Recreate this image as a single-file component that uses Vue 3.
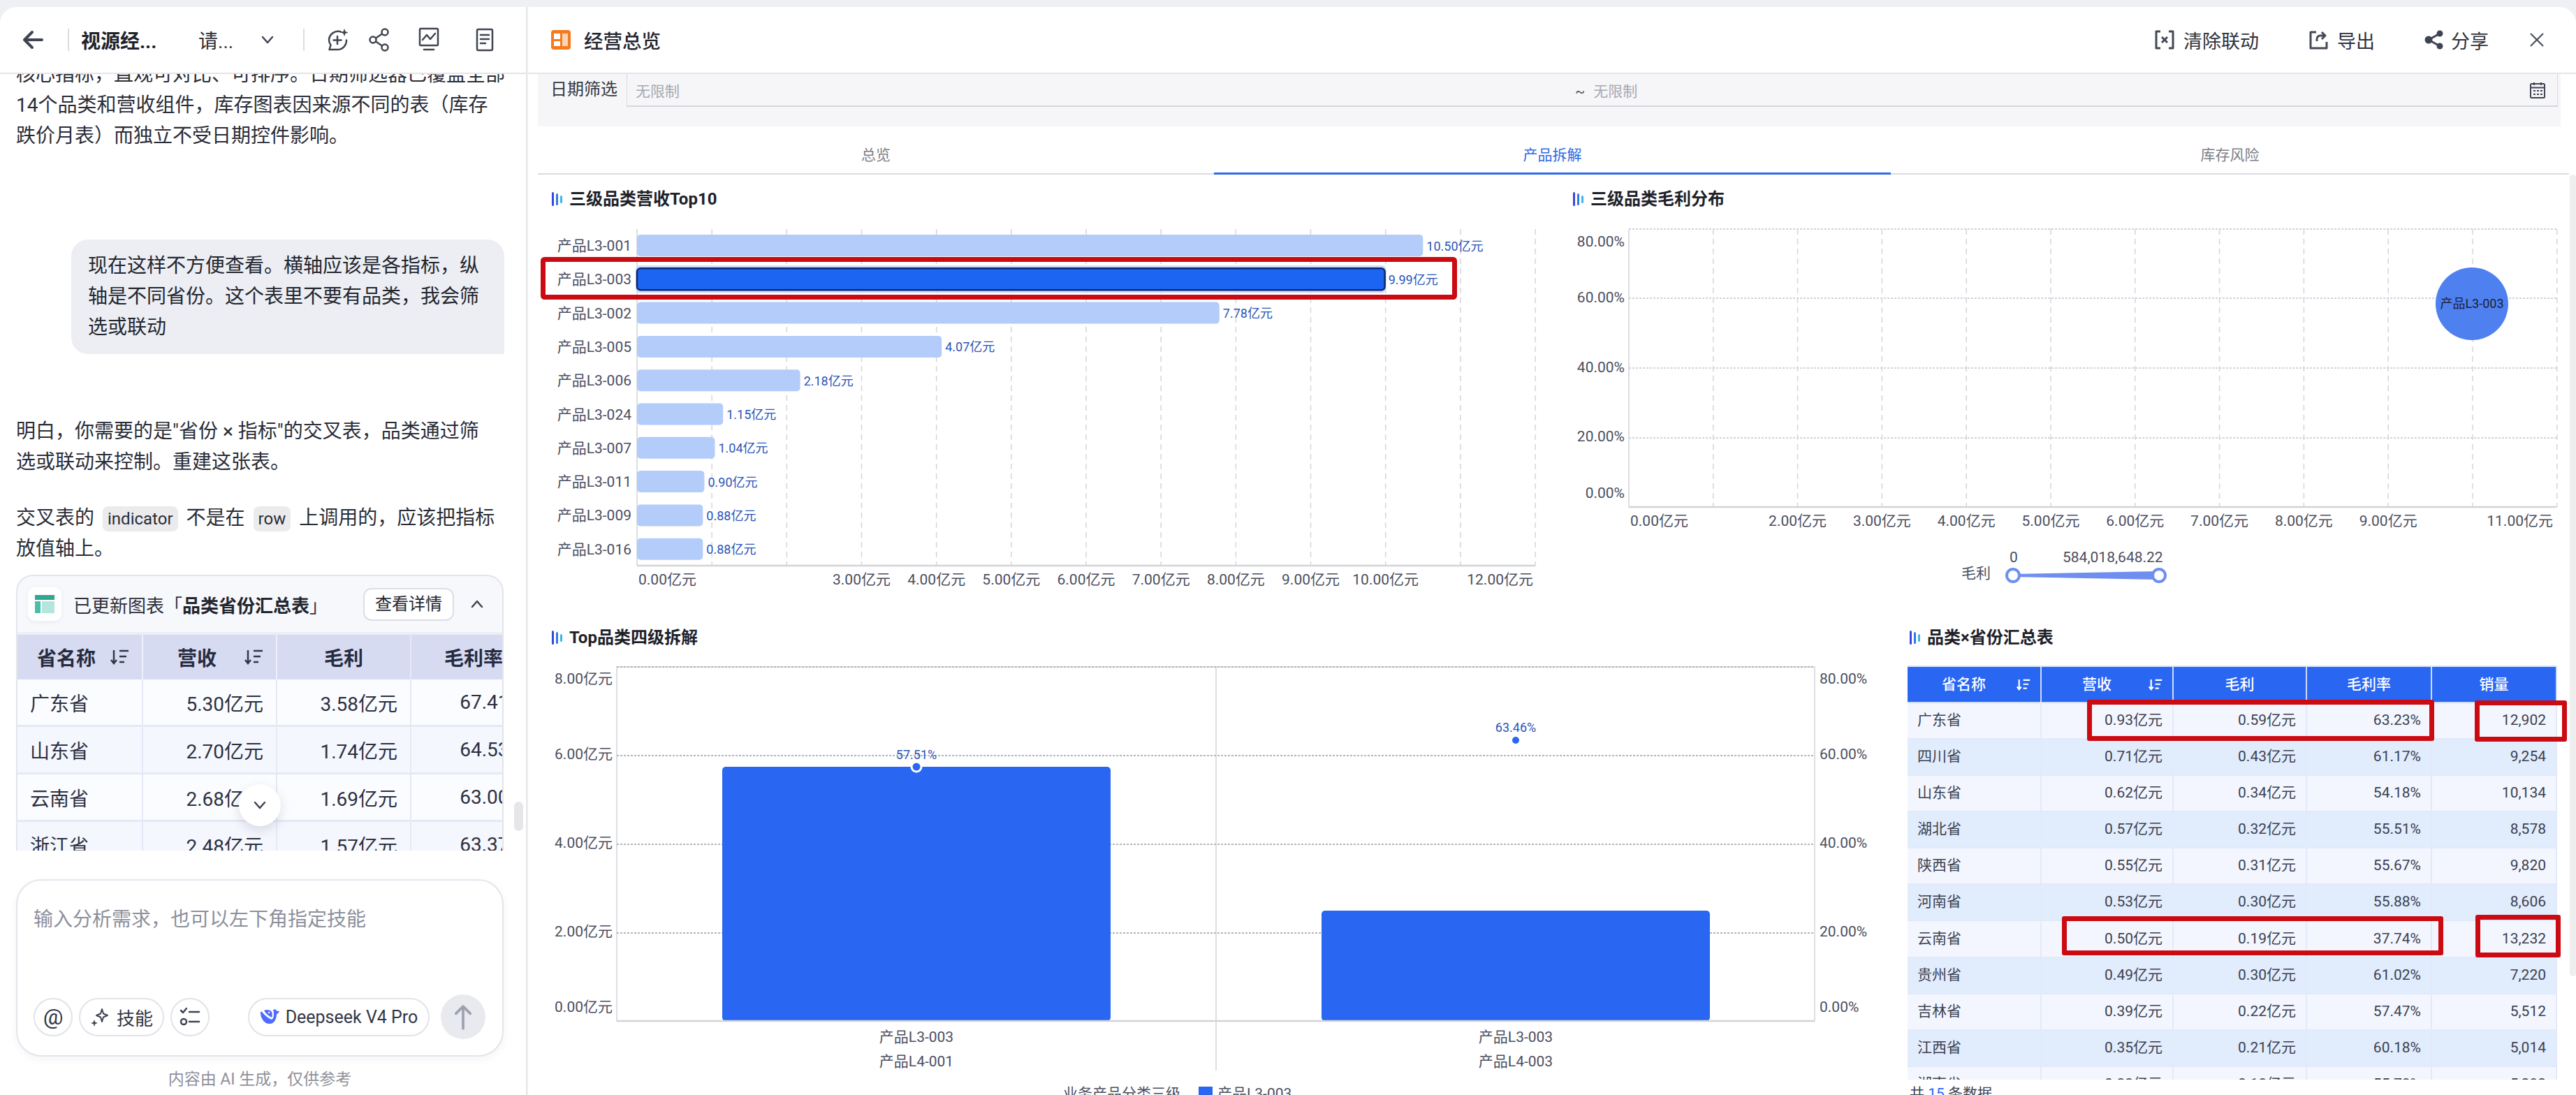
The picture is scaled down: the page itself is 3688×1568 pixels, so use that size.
<template>
  <div class="page">
    <!-- left chat panel -->
    <aside class="chat-panel">
      <header class="chat-head">
        <svg class="ic back" width="32" height="32" viewBox="0 0 32 32"><path d="M29 16H5M15 5L4 16l11 11" /></svg>
        <i class="vline first"></i>
        <b class="chat-title">视源经...</b>
        <span class="chat-sub">请...</span>
        <svg class="ic chev" width="20" height="14" viewBox="0 0 20 14"><path d="M3 3l7 8 7-8" /></svg>
        <i class="vline second"></i>
        <svg class="ic i1" width="34" height="34" viewBox="0 0 34 34">
          <path d="M22 5.500A13 13 0 0 0 5 17c0 3 1 5.500 2.500 7.500L5.500 31H17a13 13 0 0 0 13-13.500" />
          <path d="M17 12v11M11.500 17.500h11" />
          <path class="fill" d="M27 1l1.500 4 4 1.500-4 1.500L27 12l-1.500-4-4-1.500 4-1.500z" />
        </svg>
        <svg class="ic i2" width="32" height="34" viewBox="0 0 32 34">
          <circle cx="7" cy="17" r="4.500" /><circle cx="24" cy="6" r="4.500" /><circle cx="24" cy="28" r="4.500" />
          <path d="M11 14.500l9-6M11 19.500l9 6" />
        </svg>
        <svg class="ic i3" width="32" height="36" viewBox="0 0 32 36">
          <rect x="3" y="2" width="26" height="24" rx="1.500" />
          <path d="M7 18l6-7 5 6 7-8M9 32h14" />
        </svg>
        <svg class="ic i4" width="26" height="34" viewBox="0 0 26 34">
          <rect x="2" y="2" width="22" height="30" rx="2" />
          <path d="M7 10h12M7 16h12M7 22h7" />
        </svg>
      </header>

      <div class="chat-scroll">
        <div class="chat-inner">
          <p class="para top">核心指标，直观可对比、可排序。日期筛选器已覆盖全部<br />14个品类和营收组件，库存图表因来源不同的表（库存<br />跌价月表）而独立不受日期控件影响。</p>
          <div class="bubble">现在这样不方便查看。横轴应该是各指标，纵<br />轴是不同省份。这个表里不要有品类，我会筛<br />选或联动</div>
          <p class="para answer">明白，你需要的是"省份 × 指标"的交叉表，品类通过筛<br />选或联动来控制。重建这张表。</p>
          <p class="para answer2">交叉表的<code>indicator</code>不是在<code>row</code>上调用的，应该把指标<br />放值轴上。</p>

          <section class="result-card">
            <div class="result-head">
              <span class="sheet-box">
                <svg width="28" height="26" viewBox="0 0 28 26">
                  <rect width="28" height="7" fill="#2fa88f" />
                  <rect y="9" width="8" height="17" fill="#4cbda8" />
                  <rect x="10" y="9" width="18" height="17" fill="#b5e6dd" />
                </svg>
              </span>
              <span class="result-text">已更新图表「<b>品类省份汇总表</b>」</span>
              <span class="detail-btn">查看详情</span>
              <svg class="ic up" width="20" height="14" viewBox="0 0 20 14"><path d="M3 11l7-8 7 8" /></svg>
            </div>
            <div class="mini-table">
              <div class="mini-row mini-header">
                <div class="mini-cell sort first-sort">省名称
                  <svg class="sort-ic" width="27" height="24" viewBox="0 0 27 24"><path d="M5 2v19M1 16l4 5 4-5M13 3h13M13 11h10M13 19h7" /></svg>
                </div>
                <div class="mini-cell sort second-sort">营收
                  <svg class="sort-ic" width="27" height="24" viewBox="0 0 27 24"><path d="M5 2v19M1 16l4 5 4-5M13 3h13M13 11h10M13 19h7" /></svg>
                </div>
                <div class="mini-cell center">毛利</div>
                <div class="mini-cell center">毛利率</div>
              </div>
              <div v-for="r in miniRows" :key="r[0]" class="mini-row">
                <div class="mini-cell">{{ r[0] }}</div>
                <div class="mini-cell num">{{ r[1] }}</div>
                <div class="mini-cell num">{{ r[2] }}</div>
                <div class="mini-cell num">{{ r[3] }}</div>
              </div>
            </div>
          </section>
        </div>
        <span class="thumb"></span>
        <span class="to-bottom">
          <svg class="ic" width="20" height="14" viewBox="0 0 20 14"><path d="M3 3l7 8 7-8" /></svg>
        </span>
      </div>

      <div class="composer-wrap">
        <div class="composer">
          <div class="placeholder">输入分析需求，也可以左下角指定技能</div>
          <div class="tools">
            <span class="pill round at">@</span>
            <span class="pill skill">
              <svg width="28" height="28" viewBox="0 0 28 28">
                <path class="spark" d="M17 3l2 6.500L25 12l-6 2.500L17 21l-2-6.500L9 12l6-2.500z" />
                <path class="spark-dot" d="M6 18l1.300 3.700L11 23l-3.700 1.300L6 28l-1.300-3.700L1 23l3.700-1.300z" />
              </svg>
              技能
            </span>
            <span class="pill round">
              <svg class="ic" width="30" height="28" viewBox="0 0 30 28">
                <path d="M2 5l3 3 5-6M14 7h14M14 21h14" />
                <circle cx="6" cy="21" r="4" />
              </svg>
            </span>
            <span class="pill model">
              <svg width="28" height="24" viewBox="0 0 28 24" fill="#4d6bfe">
                <path d="M1 6c0 8 5 16 13 16 6 0 10-6 10-14 2 0 3-2 4-4-2 0-4 0-5-2-1-1-3-1-4 0 1 2 1 4 1 6 0 4-1 7-3 8C12 14 7 10 3 5 2 4 1 5 1 6z" />
                <path d="M6 3c4-2 9-1 11 2 1 3 1 6 0 8-4-2-8-5-11-10z" />
                <circle cx="13" cy="6" r="1.200" fill="#fff" />
              </svg>
              Deepseek V4 Pro
            </span>
            <span class="send">
              <svg width="28" height="40" viewBox="0 0 28 40"><path d="M14 38V4M3 15L14 4l11 11" /></svg>
            </span>
          </div>
        </div>
        <div class="disclaimer">内容由 AI 生成，仅供参考</div>
      </div>
    </aside>

    <!-- right dashboard -->
    <main class="board">
      <header class="board-head">
        <svg width="28" height="28" viewBox="0 0 28 28">
          <rect width="28" height="28" rx="4" fill="#f47a20" />
          <rect x="4" y="5" width="9" height="8" fill="#fff" />
          <rect x="16" y="5" width="8" height="18" fill="#fbd3b0" />
          <rect x="4" y="16" width="9" height="7" fill="#fff" />
        </svg>
        <span class="board-title">经营总览</span>
        <span class="head-action clear">
          <svg class="ic dark" width="28" height="28" viewBox="0 0 28 28">
            <path d="M8 2H2v24h6M20 2h6v24h-6M10 10l8 8M18 10l-8 8" />
          </svg>
          清除联动
        </span>
        <span class="head-action export">
          <svg class="ic dark" width="27" height="28" viewBox="0 0 27 28">
            <path d="M10 3H2v23h23v-9" />
            <path d="M11 16v-3c0-3 2-5 5-5h6M18 3l5 5-5 5" />
          </svg>
          导出
        </span>
        <span class="head-action share">
          <svg width="27" height="28" viewBox="0 0 27 28" fill="#3f4452">
            <circle cx="6" cy="14" r="5.500" /><circle cx="22" cy="5" r="4.500" /><circle cx="22" cy="23" r="4.500" />
            <path d="M6 14L22 5M6 14l16 9" stroke="#3f4452" stroke-width="3" />
          </svg>
          分享
        </span>
        <svg class="close" width="22" height="22" viewBox="0 0 22 22"><path d="M2 2l18 18M20 2L2 20" /></svg>
      </header>

      <div class="filter-bar">
        <span class="filter-label">日期筛选</span>
        <div class="date-range">
          <span class="date-from">无限制</span>
          <span class="date-to"><em>~</em>无限制</span>
          <svg class="calendar" width="24" height="24" viewBox="0 0 24 24">
            <rect x="2" y="3" width="20" height="20" rx="1.500" />
            <path d="M2 8.500h20M7 1v4M17 1v4M6 13h3M11 13h3M16 13h3M6 18h3M11 18h3M16 18h3" />
          </svg>
        </div>
      </div>

      <nav class="tabs">
        <span class="tab">总览</span>
        <span class="tab active">产品拆解</span>
        <span class="tab">库存风险</span>
      </nav>

      <div class="row one">
        <section class="col c1">
          <h3 class="sec-title"><i class="bars"><u></u><u></u><u></u></i>三级品类营收Top10</h3>
          <svg class="plot" width="1471" height="560" viewBox="769 320 1471 560">
            <line v-for="g in revGrid" :key="g" class="dash" :x1="revX(g)" :x2="revX(g)" y1="328" y2="810" />
            <line class="axis" x1="911" x2="911" y1="328" y2="810" />
            <line class="axis thick" x1="911" x2="2197" y1="810" y2="810" />
            <template v-for="(b, i) in revBars" :key="b.name">
              <text class="t-axis" x="903" :y="revY(i) + 16" text-anchor="end" dominant-baseline="central">{{ b.name }}</text>
              <rect v-if="b.hot" class="halo" x="909" :y="revY(i) - 4" :width="revX(b.v) - 907" height="39" rx="6" />
              <rect :class="b.hot ? 'bar-hot' : 'bar-soft'" x="911" :y="revY(i)" :width="revX(b.v) - 911" height="31" rx="5" />
              <text class="t-val" :x="revX(b.v) + 5" :y="revY(i) + 16" dominant-baseline="central">{{ b.v.toFixed(2) }}亿元</text>
            </template>
            <text v-for="t in revTicks" :key="t.v" class="t-axis" :x="t.x" y="830" :text-anchor="t.a" dominant-baseline="central">{{ t.v }}.00亿元</text>
            <rect class="red-mark" x="776.500" y="371.500" width="1305" height="54" rx="2" />
          </svg>
        </section>

        <section class="col c2">
          <h3 class="sec-title"><i class="bars"><u></u><u></u><u></u></i>三级品类毛利分布</h3>
          <svg class="plot" width="1437" height="560" viewBox="2240 320 1437 560">
            <line v-for="g in 11" :key="g" class="dash" :x1="2331 + g * 120.800" :x2="2331 + g * 120.800" y1="328" y2="726" />
            <line v-for="g in [328, 427, 527, 627]" :key="g" class="dot" x1="2331" x2="3659" :y1="g" :y2="g" />
            <line class="axis" x1="2331" x2="2331" y1="328" y2="726" />
            <line class="axis thick" x1="2331" x2="3659" y1="726" y2="726" />
            <text v-for="t in bubbleY" :key="t[0]" class="t-axis" x="2325" :y="t[1]" text-anchor="end" dominant-baseline="central">{{ t[0] }}</text>
            <text v-for="t in bubbleX" :key="t.l" class="t-axis" :x="t.x" y="746" :text-anchor="t.a" dominant-baseline="central">{{ t.l }}</text>
            <circle cx="3538" cy="435" r="52" fill="#4f80f0" />
            <text class="t-bubble" x="3538" y="434" text-anchor="middle" dominant-baseline="central">产品L3-003</text>
            <text class="t-axis" x="2807" y="821" dominant-baseline="central">毛利</text>
            <text class="t-axis" x="2876" y="798" dominant-baseline="central">0</text>
            <text class="t-axis" x="2952" y="798" dominant-baseline="central">584,018,648.22</text>
            <path d="M2881 822L3090 818v12L2881 826z" fill="#6f8ff0" />
            <circle class="handle" cx="2881" cy="824" r="9" />
            <circle class="handle" cx="3090" cy="824" r="9" />
          </svg>
        </section>
      </div>

      <div class="row two">
        <section class="col c3">
          <h3 class="sec-title"><i class="bars"><u></u><u></u><u></u></i>Top品类四级拆解</h3>
          <svg class="plot" width="1956" height="622" viewBox="769 946 1956 622">
            <rect class="frame" x="882" y="955" width="1715" height="507" />
            <line class="frame-line" x1="1740" x2="1740" y1="955" y2="1533" />
            <line v-for="g in [955, 1082, 1209, 1336]" :key="g" class="dot2" x1="882" x2="2597" :y1="g" :y2="g" />
            <rect class="bar-main" x="1033" y="1098" width="556" height="364" rx="5" />
            <rect class="bar-main" x="1891" y="1304" width="556" height="158" rx="5" />
            <line class="axis thick" x1="882" x2="2597" y1="1462" y2="1462" />
            <text v-for="t in comboTicks" :key="t[0]" class="t-axis" x="876" :y="t[2]" text-anchor="end" dominant-baseline="central">{{ t[0] }}</text>
            <text v-for="t in comboTicks" :key="t[1]" class="t-axis" x="2604" :y="t[2]" dominant-baseline="central">{{ t[1] }}</text>
            <circle cx="1311" cy="1098" r="7" fill="#2966f2" stroke="#fff" stroke-width="3" />
            <text class="t-val" x="1311" y="1080" text-anchor="middle" dominant-baseline="central">57.51%</text>
            <circle cx="2169" cy="1060" r="5" fill="#2966f2" />
            <text class="t-val" x="2169" y="1041" text-anchor="middle" dominant-baseline="central">63.46%</text>
            <text class="t-axis" x="1311" y="1485" text-anchor="middle" dominant-baseline="central">产品L3-003</text>
            <text class="t-axis" x="1311" y="1520" text-anchor="middle" dominant-baseline="central">产品L4-001</text>
            <text class="t-axis" x="2169" y="1485" text-anchor="middle" dominant-baseline="central">产品L3-003</text>
            <text class="t-axis" x="2169" y="1520" text-anchor="middle" dominant-baseline="central">产品L4-003</text>
            <text class="t-axis" x="1521" y="1566" dominant-baseline="central">业务产品分类三级</text>
            <rect x="1715" y="1556" width="20" height="20" fill="#2966f2" />
            <text class="t-axis" x="1742" y="1566" dominant-baseline="central">产品L3-003</text>
          </svg>
        </section>

        <section class="col c4">
          <h3 class="sec-title"><i class="bars"><u></u><u></u><u></u></i>品类×省份汇总表</h3>
          <div class="summary">
            <div class="sum-row sum-head">
              <div class="sum-cell sortable s1">省名称
                <svg class="sort-ic white" width="20" height="19" viewBox="0 0 27 24"><path d="M5 2v19M1 16l4 5 4-5M13 3h13M13 11h10M13 19h7" /></svg>
              </div>
              <div class="sum-cell sortable s2">营收
                <svg class="sort-ic white" width="20" height="19" viewBox="0 0 27 24"><path d="M5 2v19M1 16l4 5 4-5M13 3h13M13 11h10M13 19h7" /></svg>
              </div>
              <div class="sum-cell mid">毛利</div>
              <div class="sum-cell mid">毛利率</div>
              <div class="sum-cell mid">销量</div>
            </div>
            <div v-for="r in sumRows" :key="r[0]" class="sum-row">
              <div class="sum-cell">{{ r[0] }}</div>
              <div class="sum-cell num">{{ r[1] }}</div>
              <div class="sum-cell num">{{ r[2] }}</div>
              <div class="sum-cell num">{{ r[3] }}</div>
              <div class="sum-cell num">{{ r[4] }}</div>
            </div>
            <span class="mark m1"></span>
            <span class="mark m2"></span>
            <span class="mark m3"></span>
            <span class="mark m4"></span>
          </div>
          <div class="sum-foot">共 <span>15</span> 条数据</div>
        </section>
      </div>
      <span class="board-thumb"></span>
    </main>
  </div>
</template>

<script setup>
const miniRows = [
  ['广东省', '5.30亿元', '3.58亿元', '67.41%'],
  ['山东省', '2.70亿元', '1.74亿元', '64.53%'],
  ['云南省', '2.68亿元', '1.69亿元', '63.00%'],
  ['浙江省', '2.48亿元', '1.57亿元', '63.37%']
]

const revBars = [
  { name: '产品L3-001', v: 10.5 },
  { name: '产品L3-003', v: 9.99, hot: true },
  { name: '产品L3-002', v: 7.78 },
  { name: '产品L3-005', v: 4.07 },
  { name: '产品L3-006', v: 2.18 },
  { name: '产品L3-024', v: 1.15 },
  { name: '产品L3-007', v: 1.04 },
  { name: '产品L3-011', v: 0.9 },
  { name: '产品L3-009', v: 0.88 },
  { name: '产品L3-016', v: 0.88 }
]
const revGrid = [1, 2, 3, 4, 5, 6, 7, 8, 9, 10, 11, 12]
const revX = (v) => 911 + v * 107.17
const revY = (i) => 336 + i * 48.3
const revTicks = [0, 3, 4, 5, 6, 7, 8, 9, 10, 12].map((v) => ({
  v,
  x: v === 0 ? 913 : v === 12 ? 2194 : revX(v),
  a: v === 0 ? 'start' : v === 12 ? 'end' : 'middle'
}))

const bubbleY = [
  ['80.00%', 346],
  ['60.00%', 426],
  ['40.00%', 526],
  ['20.00%', 625],
  ['0.00%', 706]
]
const bubbleX = [
  { l: '0.00亿元', x: 2333, a: 'start' },
  ...[2, 3, 4, 5, 6, 7, 8, 9].map((v) => ({ l: v + '.00亿元', x: 2331 + v * 120.8, a: 'middle' })),
  { l: '11.00亿元', x: 3654, a: 'end' }
]

const comboTicks = [
  ['8.00亿元', '80.00%', 972],
  ['6.00亿元', '60.00%', 1080],
  ['4.00亿元', '40.00%', 1207],
  ['2.00亿元', '20.00%', 1334],
  ['0.00亿元', '0.00%', 1442]
]

const sumRows = [
  ['广东省', '0.93亿元', '0.59亿元', '63.23%', '12,902'],
  ['四川省', '0.71亿元', '0.43亿元', '61.17%', '9,254'],
  ['山东省', '0.62亿元', '0.34亿元', '54.18%', '10,134'],
  ['湖北省', '0.57亿元', '0.32亿元', '55.51%', '8,578'],
  ['陕西省', '0.55亿元', '0.31亿元', '55.67%', '9,820'],
  ['河南省', '0.53亿元', '0.30亿元', '55.88%', '8,606'],
  ['云南省', '0.50亿元', '0.19亿元', '37.74%', '13,232'],
  ['贵州省', '0.49亿元', '0.30亿元', '61.02%', '7,220'],
  ['吉林省', '0.39亿元', '0.22亿元', '57.47%', '5,512'],
  ['江西省', '0.35亿元', '0.21亿元', '60.18%', '5,014'],
  ['湖南省', '0.33亿元', '0.18亿元', '55.78%', '5,292']
]
</script>

<style scoped>
.page {
  width: 3688px;
  height: 1568px;
  padding-top: 10px;
  box-sizing: border-box;
  display: flex;
  overflow: hidden;
  background: #eef0f4;
  color: #23262f;
  font-family: "Roboto", "Noto Sans CJK SC", sans-serif;
}

.ic { fill: none; stroke: #3f4452; stroke-width: 2.5; stroke-linecap: round; stroke-linejoin: round; flex: none; }
.ic .fill { fill: #3f4452; stroke: none; }

/* chat side */
.chat-panel {
  width: 753px;
  flex: none;
  display: flex;
  flex-direction: column;
  background: #fff;
  border-right: 2px solid #e7e8ed;
  border-radius: 24px 0 0 0;
}
.chat-head {
  height: 94px;
  flex: none;
  display: flex;
  align-items: center;
  border-bottom: 2px solid #e4e5ea;
}
.back { margin-left: 31px; stroke-width: 4; }
.vline { width: 2px; height: 32px; background: #dcdde3; flex: none; }
.vline.first { margin-left: 34px; }
.chat-title { font-size: 28px; margin-left: 17px; width: 168px; color: #20232c; white-space: nowrap; }
.chat-sub { font-size: 28px; width: 89px; white-space: nowrap; color: #2b2e38; }
.chev { margin-right: 41px; }
.i1 { margin-left: 30px; }
.i2 { margin-left: 27px; }
.i3 { margin-left: 39px; }
.i4 { margin-left: 51px; }

.chat-scroll {
  height: 1112px;
  flex: none;
  position: relative;
  overflow: hidden;
}
.chat-inner { padding: 0 23px 0 23px; margin-top: -21px; }
.para {
  margin: 0;
  font-size: 28px;
  line-height: 44px;
  color: #2a2d37;
  white-space: nowrap;
}
.bubble {
  margin: 126px 0 0 79px;
  padding: 16px 24px;
  width: 620px;
  box-sizing: border-box;
  font-size: 28px;
  line-height: 44px;
  background: #eceef3;
  border-radius: 24px 24px 0 24px;
  white-space: nowrap;
}
.answer { margin-top: 89px; }
.answer2 { margin-top: 36px; }
code {
  display: inline-block;
  font-family: inherit;
  font-size: 24px;
  line-height: 36px;
  padding: 0 7px;
  margin: 0 12px;
  background: #ebebee;
  border-radius: 8px;
}
.result-card {
  margin-top: 15px;
  width: 698px;
  box-sizing: border-box;
  border: 2px solid #e3e5ec;
  border-bottom: 0;
  border-radius: 24px 24px 0 0;
  background: #f7f8fc;
  overflow: hidden;
}
.result-head {
  height: 80px;
  display: flex;
  align-items: center;
  padding-left: 15px;
}
.sheet-box {
  width: 48px;
  height: 48px;
  border-radius: 10px;
  background: #fff;
  box-shadow: 0 2px 6px rgba(30, 40, 90, 0.06);
  display: flex;
  align-items: center;
  justify-content: center;
  flex: none;
}
.result-text { font-size: 26px; margin-left: 17px; width: 415px; white-space: nowrap; color: #2e313b; letter-spacing: 0; }
.result-text b { color: #23262f; }
.detail-btn {
  width: 130px;
  height: 47px;
  box-sizing: border-box;
  border: 2px solid #dcdee6;
  border-radius: 12px;
  background: #fff;
  font-size: 24px;
  line-height: 43px;
  text-align: center;
  flex: none;
}
.up { margin-left: 23px; }
.mini-table { border-top: 4px solid #eceef6; width: 770px; background: #e6e9f5; }
.mini-row { display: grid; grid-template-columns: 180px 192px 192px 180px; height: 68px; border-top: 0; background: #fbfcff; }
.mini-row:nth-child(odd) { background: #f5f7fe; }
.mini-row + .mini-row { border-bottom: 3px solid #e6e9f5; box-sizing: border-box; }
.mini-header.mini-row { background: #d6dbf2; height: 64px; }
.mini-cell {
  font-size: 28px;
  display: flex;
  align-items: center;
  padding: 0 18px;
  box-sizing: border-box;
  border-right: 2px solid #e6e9f5;
  color: #2c3040;
  white-space: nowrap;
}
.mini-cell.num { justify-content: flex-end; }
.mini-cell.center { justify-content: center; font-weight: 700; color: #282c40; }
.mini-cell.sort { justify-content: space-between; font-weight: 700; color: #282c40; border-right: 2px solid #eef0fa; }
.first-sort { padding-left: 28px; }
.second-sort { padding-left: 49px; }
.sort-ic { fill: none; stroke: #34384c; stroke-width: 2.5; flex: none; }
.sort-ic.white { stroke: #fff; stroke-width: 3; }
.thumb {
  position: absolute;
  left: 736px;
  top: 1042px;
  width: 13px;
  height: 42px;
  border-radius: 7px;
  background: #e6e6e8;
}
.to-bottom {
  position: absolute;
  left: 342px;
  top: 1017px;
  width: 60px;
  height: 60px;
  border-radius: 50%;
  background: #fff;
  box-shadow: 0 6px 16px rgba(30, 40, 70, 0.14);
  display: flex;
  align-items: center;
  justify-content: center;
}

.composer-wrap { padding: 41px 0 0 23px; }
.composer {
  width: 698px;
  height: 254px;
  box-sizing: border-box;
  border: 2px solid #e3e5ec;
  border-radius: 36px;
  box-shadow: 0 4px 12px rgba(30, 40, 70, 0.05);
  padding: 36px 23px 23px;
  display: flex;
  flex-direction: column;
  justify-content: space-between;
}
.placeholder { font-size: 28px; line-height: 40px; color: #8c8f9c; }
.tools { display: flex; align-items: center; height: 64px; }
.pill {
  height: 55px;
  box-sizing: border-box;
  border: 2px solid #e2e3e9;
  border-radius: 28px;
  display: flex;
  align-items: center;
  justify-content: center;
  font-size: 26px;
  color: #333744;
  flex: none;
}
.round { width: 56px; }
.at { font-size: 32px; }
.skill { width: 122px; margin: 0 9px; gap: 10px; }
.spark { fill: none; stroke: #3f4452; stroke-width: 2; stroke-linejoin: round; }
.spark-dot { fill: #3f4452; }
.model { width: 260px; margin-left: 55px; gap: 9px; font-size: 25px; }
.send {
  width: 64px;
  height: 64px;
  margin-left: 16px;
  border-radius: 50%;
  background: #e9eaf0;
  display: flex;
  align-items: center;
  justify-content: center;
  flex: none;
}
.send svg { fill: none; stroke: #9ea1af; stroke-width: 4; stroke-linecap: round; stroke-linejoin: round; width: 26px; height: 38px; }
.disclaimer { margin-top: 16px; width: 698px; text-align: center; font-size: 23px; line-height: 34px; color: #8f919c; }

/* dashboard */
.board {
  flex: 1;
  min-width: 0;
  position: relative;
  background: #fff;
  border-radius: 0 24px 0 0;
  padding-left: 14px;
  margin-left: 1px;
}
.board-head {
  height: 94px;
  margin-left: -14px;
  padding-left: 33px;
  display: flex;
  align-items: center;
  border-bottom: 2px solid #e4e5ea;
}
.board-title { font-size: 27.500px; font-weight: 500; margin-left: 19px; width: 2249px; color: #23262f; flex: none; }
.head-action { display: flex; align-items: center; gap: 13px; font-size: 27px; color: #2f323c; flex: none; white-space: nowrap; }
.clear { width: 221px; }
.export { width: 165px; }
.share { width: 150px; gap: 11px; }
.dark { stroke: #444957; stroke-width: 3; stroke-linecap: butt; }
.close { fill: none; stroke: #444957; stroke-width: 2; flex: none; }

.filter-bar {
  height: 75px;
  width: 2896px;
  box-sizing: border-box;
  background: #f6f6f8;
  display: flex;
  align-items: flex-start;
  padding-left: 18px;
}
.filter-label { font-size: 24px; line-height: 44px; width: 109px; color: #33363f; flex: none; }
.date-range {
  width: 2765px;
  height: 47px;
  box-sizing: border-box;
  border-left: 1px solid #dadbe0;
  border-right: 1px solid #dadbe0;
  border-bottom: 2px solid #d5d6db;
  display: grid;
  grid-template-columns: 1345px 1fr 40px;
  align-items: center;
  padding-left: 12px;
  font-size: 21px;
  color: #a7a9b3;
}
.date-to em { font-style: normal; color: #555; margin-right: 12px; }
.calendar { fill: none; stroke: #3f4452; stroke-width: 2; }

.tabs { height: 69px; width: 2908px; display: grid; grid-template-columns: 968px 969px 971px; }
.tab {
  font-size: 21px;
  line-height: 82px;
  text-align: center;
  color: #7d7f88;
  height: 69px;
  box-sizing: border-box;
  border-bottom: 2px solid #dddde0;
}
.tab.active { color: #2d6ae3; border-bottom: 3px solid #2f6be8; }

.row { display: flex; }
.row.one { height: 630px; }
.row.two { height: 688px; }
.c1 { width: 1471px; }
.c2 { width: 1437px; }
.c3 { width: 1956px; }
.c4 { width: 950px; position: relative; }
.col { flex: none; }
.sec-title {
  margin: 0;
  height: 26px;
  padding-top: 22px;
  padding-left: 20px;
  display: flex;
  align-items: center;
  gap: 10px;
  font-size: 24px;
  font-weight: 700;
  line-height: 26px;
  color: #1e2129;
  white-space: nowrap;
  box-sizing: content-box;
}
.c2 .sec-title { padding-left: 11px; }
.row.two .sec-title { padding-top: 20px; }
.c4 .sec-title { padding-left: 8px; }
.bars { display: flex; align-items: center; gap: 3px; flex: none; height: 20px; }
.bars u { display: block; width: 3px; border-radius: 2px; height: 20px; background: #3b46dc; }
.bars u:nth-child(2) { height: 17px; background: #2f7ae6; }
.bars u:nth-child(3) { height: 11px; background: #3cb4e8; }
.plot { display: block; margin-top: 22px; }
.row.two .plot { margin-top: 20px; }
.dash { stroke: #d6d6da; stroke-width: 1.5; stroke-dasharray: 8 6; }
.dot { stroke: #d2d3de; stroke-width: 2; stroke-dasharray: 3 2; }
.dot2 { stroke: #b4b5bd; stroke-width: 2; stroke-dasharray: 3 2; }
.axis { stroke: #d2d3d8; stroke-width: 1.5; }
.axis.thick { stroke-width: 2.5; }
.frame { fill: none; stroke: #d4d5da; stroke-width: 1.5; }
.frame-line { stroke: #d4d5da; stroke-width: 1.5; }
.t-axis { font-size: 21px; fill: #4b4e60; }
.t-val { font-size: 18px; fill: #2b55b8; }
.t-bubble { font-size: 18px; fill: #1c2135; }
.bar-soft { fill: #b3ccfa; }
.bar-hot { fill: #1c64f2; stroke: #0b2a6b; stroke-width: 2.5; }
.bar-main { fill: #2966f2; }
.halo { fill: #c9dafc; }
.red-mark { fill: none; stroke: #cc0a11; stroke-width: 7; }
.handle { fill: #fff; stroke: #6f8ff0; stroke-width: 4; }

.summary {
  position: relative;
  margin: 27px 0 0 5px;
  width: 930px;
  height: 593px;
  overflow: visible;
  border-top: 2px solid #d9e6fb;
}
.sum-row { display: grid; grid-template-columns: 192px 189px 191px 179px 179px; height: 52.100px; background: #f3f6fe; }
.sum-row:nth-child(odd) { background: #e1ecfc; }
.sum-row:last-of-type { height: 20px; overflow: hidden; }
.sum-head.sum-row { background: #2966f2; height: 50px; }
.sum-cell {
  font-size: 21px;
  line-height: 52px;
  padding: 0 14px;
  box-sizing: border-box;
  border-right: 2px solid #e2eafa;
  border-bottom: 2px solid #e2eafa;
  color: #3c4150;
  white-space: nowrap;
}
.sum-cell.num { text-align: right; }
.sum-head .sum-cell { color: #fff; font-weight: 500; border-color: #cfdcf8; font-size: 21px; line-height: 50px; }
.sum-cell.mid { text-align: center; }
.sortable { display: flex; align-items: center; justify-content: space-between; }
.s1 { padding-left: 49px; }
.s2 { padding-left: 58px; }
.mark { position: absolute; border: 7px solid #cc0a11; border-radius: 3px; box-sizing: border-box; pointer-events: none; }
.m1 { left: 257px; top: 47px; width: 497px; height: 59px; }
.m2 { left: 812px; top: 48px; width: 132px; height: 59px; }
.m3 { left: 221px; top: 357px; width: 546px; height: 56px; }
.m4 { left: 813px; top: 355px; width: 122px; height: 61px; }
.sum-foot { margin: 5px 0 0 8px; font-size: 21px; line-height: 26px; color: #3c4150; }
.sum-foot span { color: #2966f2; }
.board-thumb {
  position: absolute;
  right: 0;
  top: 240px;
  width: 9px;
  height: 1148px;
  background: #eeeeef;
  border-radius: 5px;
}
</style>

<style>
html, body { margin: 0; background: #eef0f4; }
</style>
